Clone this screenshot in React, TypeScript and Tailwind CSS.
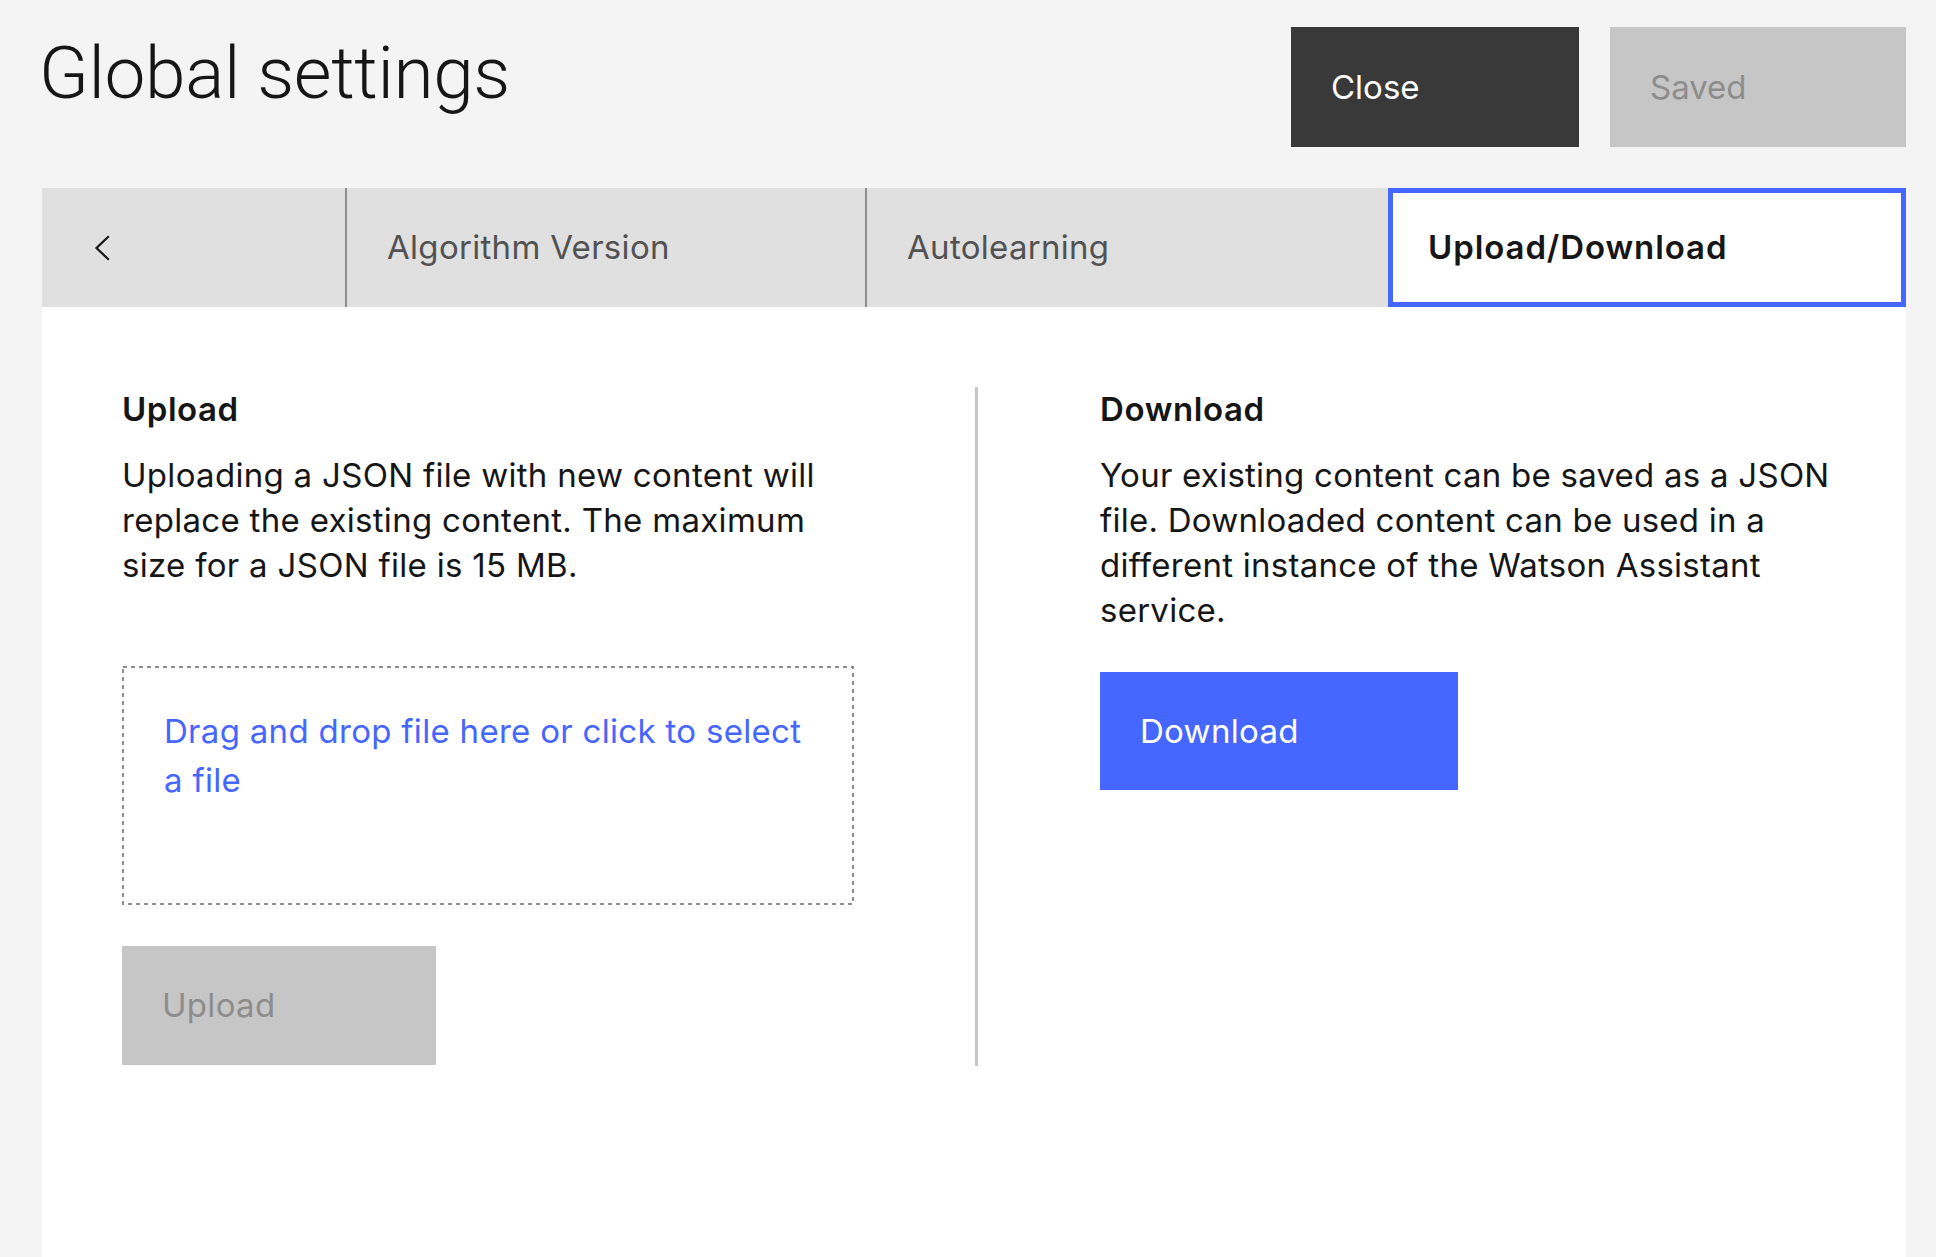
import React from "react";

function Chevron() {
  return (
    <svg width="16" height="26" viewBox="0 0 16 26" fill="none">
      <path d="M14 2 L2.5 13 L14 24" stroke="#161616" strokeWidth="2.2" strokeLinecap="square" />
    </svg>
  );
}

function DashedBox({ children }: { children: React.ReactNode }) {
  return (
    <div className="relative w-full h-[239px] pl-[42px] pr-[30px] pt-[41px] cursor-pointer">
      <svg className="absolute inset-0 w-full h-full pointer-events-none" preserveAspectRatio="none">
        <rect x="1" y="1" width="calc(100% - 2px)" height="calc(100% - 2px)" fill="none" stroke="#8d8d8d" strokeWidth="2" strokeDasharray="4 4" />
      </svg>
      {children}
    </div>
  );
}

export default function App() {
  return (
    <div className="min-h-screen w-full bg-[#f4f4f4] pl-[42px] pr-[30px] font-['Inter','Roboto',sans-serif] text-[#161616]">
      <header className="flex justify-between h-[188px] pt-[27px]">
        <h1 className="font-['Roboto',sans-serif] text-[73px] font-light leading-[88px] mt-[2px] ml-[-3px] tracking-[-0.4px]">
          Global settings
        </h1>
        <div className="flex gap-[31px]">
          <button className="w-[288px] h-[120px] bg-[#393939] text-white text-left pl-[40px] text-[33px] leading-none">
            Close
          </button>
          <button className="w-[296px] h-[120px] bg-[#c6c6c6] text-[#8d8d8d] text-left pl-[40px] text-[33px] leading-none">
            Saved
          </button>
        </div>
      </header>

      <nav className="flex h-[119px] bg-[#e0e0e0]">
        <div className="w-[305px] flex items-center pl-[52px] border-r-2 border-[#8d8d8d]">
          <Chevron />
        </div>
        <div className="w-[520px] flex items-center pl-[40px] border-r-2 border-[#8d8d8d] text-[33px] tracking-[0.3px] text-[#525252]">
          Algorithm Version
        </div>
        <div className="w-[521px] flex items-center pl-[40px] text-[33px] tracking-[0.3px] text-[#525252]">
          Autolearning
        </div>
        <div className="flex-1 flex items-center pl-[35px] border-[5px] border-[#4566ff] bg-white text-[33px] font-semibold tracking-[0.9px] text-[#161616]">
          Upload/Download
        </div>
      </nav>

      <main className="bg-white min-h-[950px] px-[80px] pt-[80px]">
        <div className="flex">
          <section className="w-[732px]">
            <h2 className="text-[33px] font-semibold tracking-[0.5px] leading-[45px] mb-[21px]">Upload</h2>
            <p className="text-[33px] tracking-[0.3px] leading-[45px] whitespace-nowrap">
              Uploading a JSON file with new content will
              <br />
              replace the existing content. The maximum
              <br />
              size for a JSON file is 15 MB.
            </p>
            <div className="mt-[78px]">
              <DashedBox>
                <p className="text-[33px] tracking-[0.3px] leading-[49px] text-[#4566ff] whitespace-nowrap">
                  Drag and drop file here or click to select
                  <br />
                  a file
                </p>
              </DashedBox>
            </div>
            <button className="mt-[41px] w-[314px] h-[119px] bg-[#c6c6c6] text-[#8d8d8d] text-left pl-[40px] text-[33px] tracking-[0.3px] leading-none">
              Upload
            </button>
          </section>

          <div className="w-[3px] h-[679px] bg-[#c6c6c6] ml-[121px] mr-[122px] shrink-0" />

          <section className="w-[726px]">
            <h2 className="text-[33px] font-semibold tracking-[0.6px] leading-[45px] mb-[21px]">Download</h2>
            <p className="text-[33px] tracking-[0.25px] leading-[45px] whitespace-nowrap">
              Your existing content can be saved as a JSON
              <br />
              file. Downloaded content can be used in a
              <br />
              different instance of the Watson Assistant
              <br />
              service.
            </p>
            <button className="mt-[39px] w-[358px] h-[118px] bg-[#4566ff] text-white text-left pl-[40px] text-[33px] tracking-[0.3px] leading-none">
              Download
            </button>
          </section>
        </div>
      </main>
    </div>
  );
}
